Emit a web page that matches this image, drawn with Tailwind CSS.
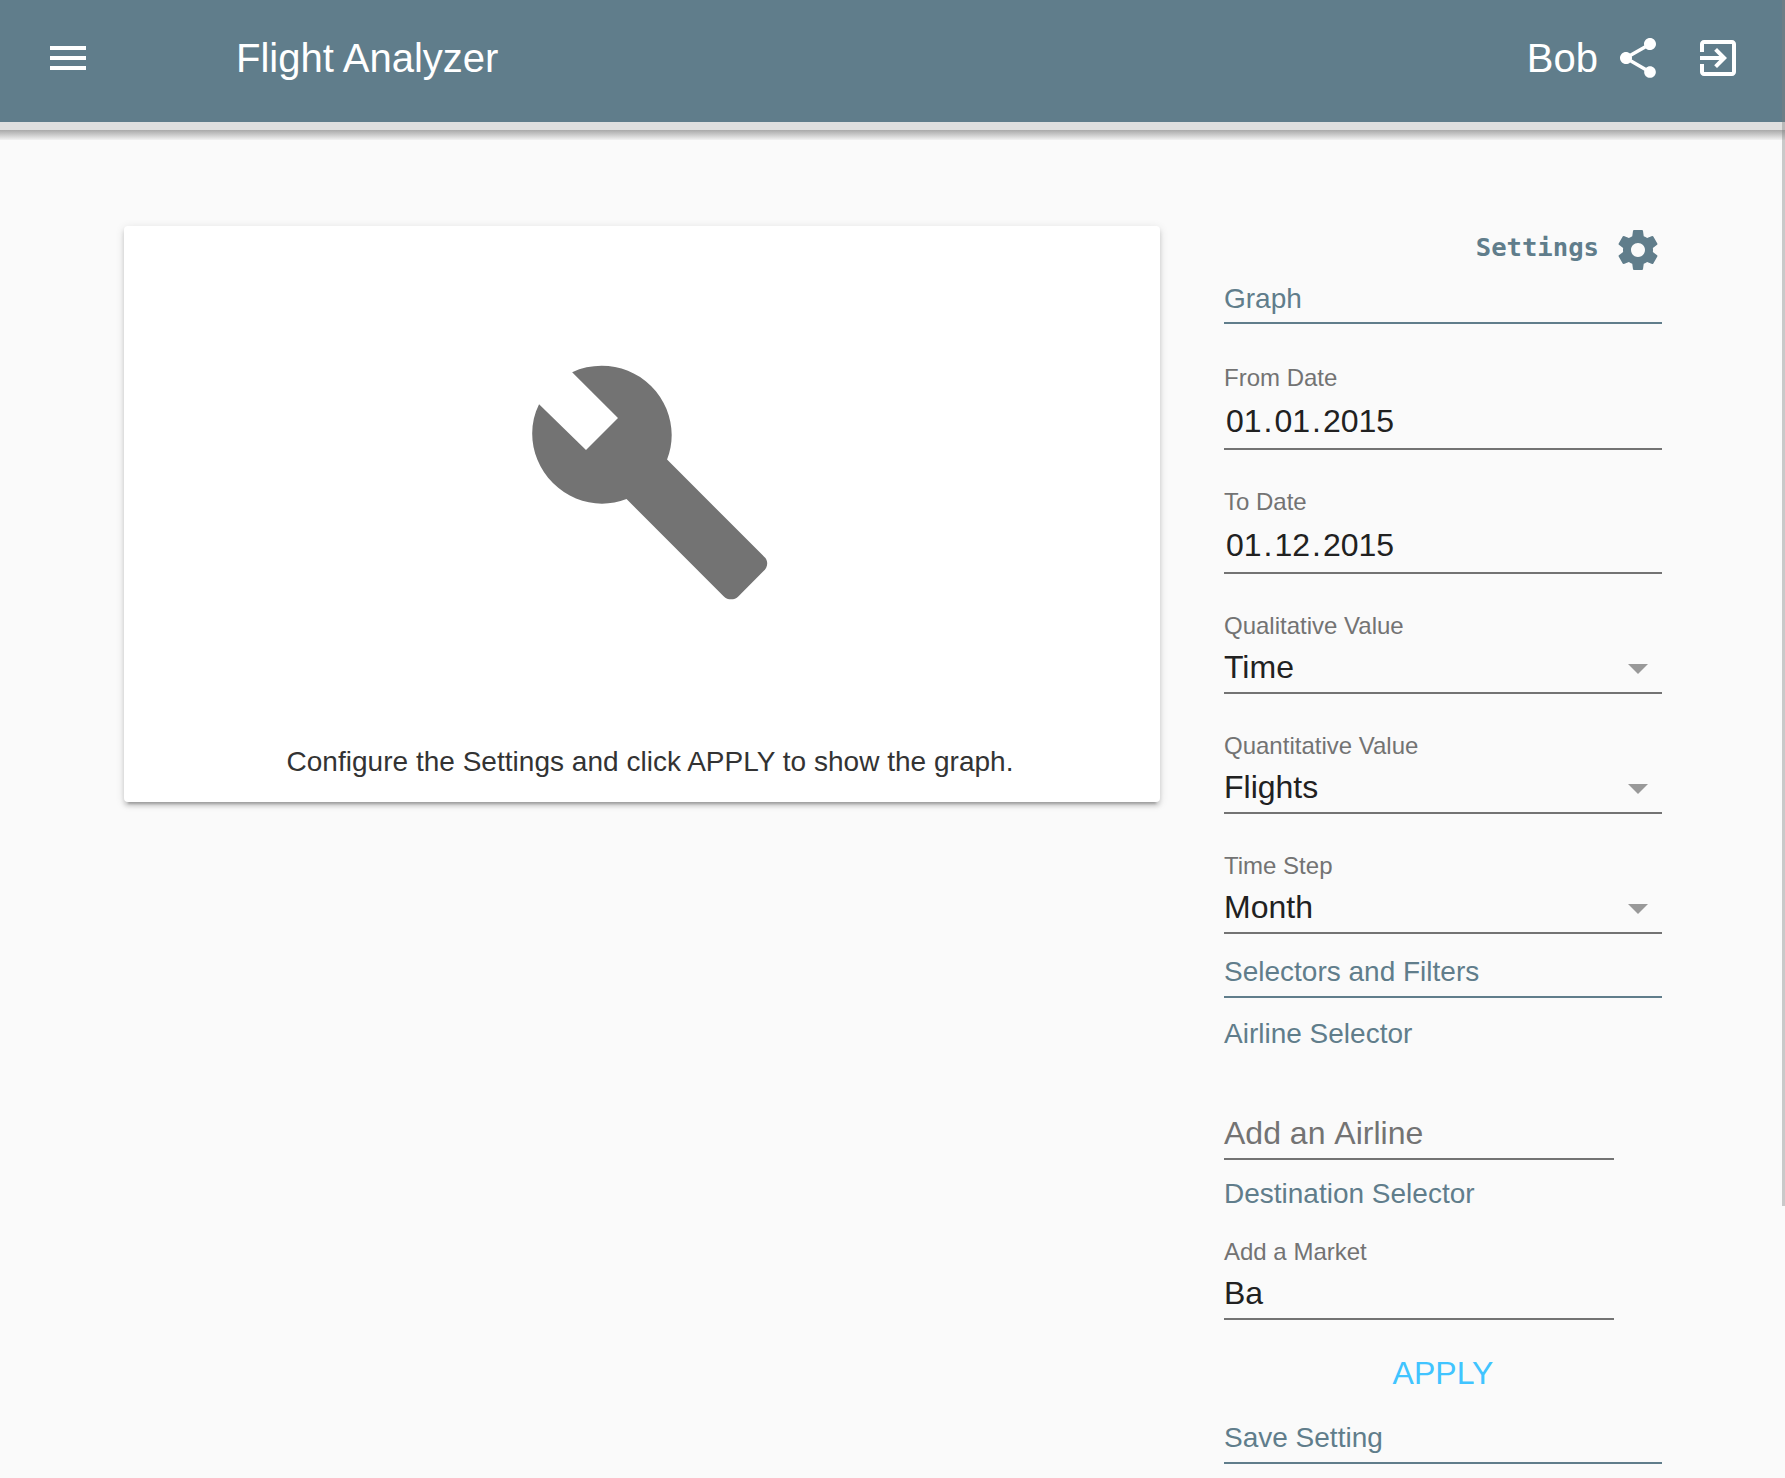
<!DOCTYPE html>
<html lang="en">
<head>
<meta charset="utf-8">
<title>Flight Analyzer</title>
<script src="https://cdn.jsdelivr.net/npm/@tailwindcss/browser@4"></script>
</head>
<body class="relative h-[1478px] overflow-hidden bg-[#fafafa] font-['Liberation_Sans',Arial,sans-serif] text-[#212121]">
  <header>
    <div class="flex h-[122px] items-start bg-[#607d8b] pt-[34px] pr-[43px] pl-11 text-white">
      <svg class="size-12" viewBox="0 0 24 24" fill="currentColor"><path d="M3 18h18v-2H3v2zm0-5h18v-2H3v2zm0-7v2h18V6H3z"/></svg>
      <h1 class="ml-36 text-[40px] leading-12">Flight Analyzer</h1>
      <div class="ml-auto flex">
        <span class="mr-4 text-[40px] leading-12">Bob</span>
        <svg class="size-12" viewBox="0 0 24 24" fill="currentColor"><path d="M18 16.08c-.76 0-1.44.3-1.96.77L8.91 12.7c.05-.23.09-.46.09-.7s-.04-.47-.09-.7l7.05-4.11c.54.5 1.25.81 2.04.81 1.66 0 3-1.34 3-3s-1.34-3-3-3-3 1.34-3 3c0 .24.04.47.09.7L8.04 9.81C7.5 9.31 6.79 9 6 9c-1.66 0-3 1.34-3 3s1.34 3 3 3c.79 0 1.5-.31 2.04-.81l7.12 4.16c-.05.21-.08.43-.08.65 0 1.61 1.31 2.92 2.92 2.92 1.61 0 2.92-1.31 2.92-2.92s-1.31-2.92-2.92-2.92z"/></svg>
        <svg class="ml-8 size-12" viewBox="0 0 24 24" fill="currentColor"><path d="M10.09 15.59L11.5 17l5-5-5-5-1.41 1.41L12.67 11H3v2h9.67l-2.58 2.59zM19 3H5c-1.11 0-2 .9-2 2v4h2V5h14v14H5v-4H3v4c0 1.1.89 2 2 2h14c1.1 0 2-.9 2-2V5c0-1.1-.9-2-2-2z"/></svg>
      </div>
    </div>
    <div class="h-2 bg-[#dfdfdf]"></div>
    <div class="h-2.5 bg-linear-to-b from-[#a9a9a9] via-[#cccccc] to-[#f2f2f2]"></div>
  </header>

  <main class="flex items-start pt-[86px] pl-[124px]">
    <section class="flex h-[576px] w-[1036px] flex-col items-center rounded-[4px] bg-white pt-32 pl-4 shadow-[0_4px_4px_0_rgba(0,0,0,0.14),0_2px_10px_0_rgba(0,0,0,0.12),0_6px_2px_-4px_rgba(0,0,0,0.2)]">
      <svg class="size-64 text-[#737373]" viewBox="0 0 24 24" fill="currentColor"><path d="M22.7 19l-9.1-9.1c.9-2.3.4-5-1.5-6.9-2-2-5-2.4-7.4-1.3L9 6 6 9 1.6 4.7C.4 7.1.9 10.1 2.9 12.1c1.9 1.9 4.6 2.4 6.9 1.5l9.1 9.1c.4.4 1 .4 1.4 0l2.3-2.3c.5-.4.5-1.1.1-1.4z"/></svg>
      <p class="mt-[132px] text-[28px] leading-10 tracking-[0.02px] text-[#333]">Configure the Settings and click APPLY to show the graph.</p>
    </section>

    <aside class="ml-16 w-[438px]">
      <div class="flex h-12 justify-end text-[#607d8b]">
        <span class="mr-[15px] font-['DejaVu_Sans_Mono',monospace] text-[25.6px] leading-[42px] font-bold">Settings</span>
        <svg class="size-12" viewBox="0 0 24 24" fill="currentColor"><path d="M19.43 12.98c.04-.32.07-.64.07-.98s-.03-.66-.07-.98l2.11-1.65c.19-.15.24-.42.12-.64l-2-3.46c-.12-.22-.39-.3-.61-.22l-2.49 1c-.52-.4-1.08-.73-1.69-.98l-.38-2.65C14.46 2.18 14.25 2 14 2h-4c-.25 0-.46.18-.49.42l-.38 2.65c-.61.25-1.17.59-1.69.98l-2.49-1c-.23-.09-.49 0-.61.22l-2 3.46c-.13.22-.07.49.12.64l2.11 1.65c-.04.32-.07.65-.07.98s.03.66.07.98l-2.11 1.65c-.19.15-.24.42-.12.64l2 3.46c.12.22.39.3.61.22l2.49-1c.52.4 1.08.73 1.69.98l.38 2.65c.03.24.24.42.49.42h4c.25 0 .46-.18.49-.42l.38-2.65c.61-.25 1.17-.59 1.69-.98l2.49 1c.23.09.49 0 .61-.22l2-3.46c.12-.22.07-.49-.12-.64l-2.11-1.65zM12 15.5c-1.93 0-3.5-1.57-3.5-3.5s1.57-3.5 3.5-3.5 3.5 1.57 3.5 3.5-1.57 3.5-3.5 3.5z"/></svg>
      </div>
      <h2 class="mt-[5px] border-b-2 border-[#607d8b] pb-[3px] text-[28px] leading-10 text-[#607d8b]">Graph</h2>

      <div class="mt-9 flex flex-col gap-[34px]">
        <div class="border-b-2 border-[#737373] pb-0.5">
          <div class="text-[24px] leading-9 text-[#737373]">From Date</div>
          <div class="flex text-[32px] leading-[50px]"><span class="px-0.5">01</span>.<span class="px-0.5">01</span>.<span class="px-0.5">2015</span></div>
        </div>
        <div class="border-b-2 border-[#737373] pb-0.5">
          <div class="text-[24px] leading-9 text-[#737373]">To Date</div>
          <div class="flex text-[32px] leading-[50px]"><span class="px-0.5">01</span>.<span class="px-0.5">12</span>.<span class="px-0.5">2015</span></div>
        </div>
        <div class="border-b-2 border-[#737373] pb-0.5">
          <div class="text-[24px] leading-9 text-[#737373]">Qualitative Value</div>
          <div class="flex h-[46px] justify-between text-[32px] leading-[46px]">Time<svg class="size-12 text-[#999]" viewBox="0 0 24 24" fill="currentColor"><path d="M7 10l5 5 5-5z"/></svg></div>
        </div>
        <div class="border-b-2 border-[#737373] pb-0.5">
          <div class="text-[24px] leading-9 text-[#737373]">Quantitative Value</div>
          <div class="flex h-[46px] justify-between text-[32px] leading-[46px]">Flights<svg class="size-12 text-[#999]" viewBox="0 0 24 24" fill="currentColor"><path d="M7 10l5 5 5-5z"/></svg></div>
        </div>
        <div class="border-b-2 border-[#737373] pb-0.5">
          <div class="text-[24px] leading-9 text-[#737373]">Time Step</div>
          <div class="flex h-[46px] justify-between text-[32px] leading-[46px]">Month<svg class="size-12 text-[#999]" viewBox="0 0 24 24" fill="currentColor"><path d="M7 10l5 5 5-5z"/></svg></div>
        </div>
      </div>

      <h2 class="mt-[18px] border-b-2 border-[#607d8b] pb-1 text-[28px] leading-10 text-[#607d8b]">Selectors and Filters</h2>
      <h3 class="mt-4 text-[28px] leading-10 text-[#607d8b]">Airline Selector</h3>
      <div class="mt-14 w-[390px] border-b-2 border-[#737373] pb-0.5 text-[32px] leading-[46px] text-[#737373] [font-kerning:none]">Add an Airline</div>
      <h3 class="mt-3.5 text-[28px] leading-10 text-[#607d8b]">Destination Selector</h3>
      <div class="mt-5 w-[390px] border-b-2 border-[#737373] pb-0.5">
        <div class="text-[24px] leading-9 text-[#737373]">Add a Market</div>
        <div class="text-[32px] leading-[46px]">Ba</div>
      </div>
      <button class="mt-[29px] block w-full text-center text-[32px] leading-12 text-[#40c4ff]">APPLY</button>
      <h2 class="mt-[21px] border-b-2 border-[#607d8b] pb-1 text-[28px] leading-10 text-[#607d8b]">Save Setting</h2>
    </aside>
  </main>

  <!-- overlay scrollbar thumb -->
  <div class="absolute top-0 right-0 h-[1206px] w-[3px] bg-[#808080]/40"></div>
</body>
</html>
